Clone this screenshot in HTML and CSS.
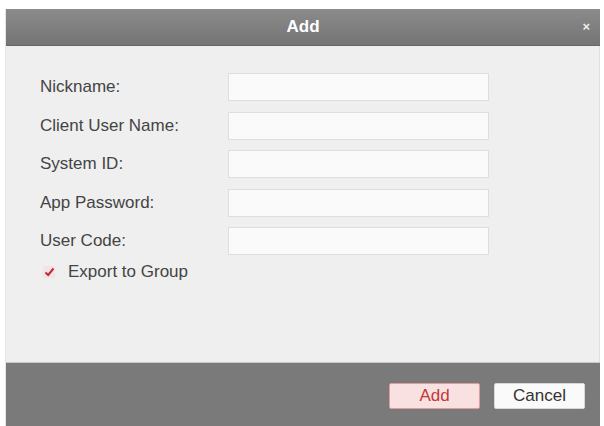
FILE: index.html
```html
<!DOCTYPE html>
<html lang="en">
<head>
    <meta charset="UTF-8">
    <meta name="viewport" content="width=device-width, initial-scale=1.0">
    <title>Add</title>
    <link rel="stylesheet" href="styles.css">
</head>
<body>
    <div class="dialog">
        <header class="dialog-header">
            <h1>Add</h1>
            <span class="close">&times;</span>
        </header>

        <main class="dialog-body">
            <form class="add-form">
                <div class="row">
                    <label for="nickname">Nickname:</label>
                    <input type="text" id="nickname">
                </div>
                <div class="row">
                    <label for="clientUser">Client User Name:</label>
                    <input type="text" id="clientUser">
                </div>
                <div class="row">
                    <label for="systemId">System ID:</label>
                    <input type="text" id="systemId">
                </div>
                <div class="row">
                    <label for="appPassword">App Password:</label>
                    <input type="password" id="appPassword">
                </div>
                <div class="row">
                    <label for="userCode">User Code:</label>
                    <input type="text" id="userCode">
                </div>
                <div class="check-row">
                    <span class="check">
                        <svg width="11" height="10" viewBox="0 0 11 10">
                            <path d="M1.5 5.5 L4.2 8 L9.5 1.5" fill="none" stroke="#c0293a" stroke-width="2"/>
                        </svg>
                    </span>
                    <span>Export to Group</span>
                </div>
            </form>
        </main>

        <footer class="dialog-footer">
            <button class="btn btn-add">Add</button>
            <button class="btn">Cancel</button>
        </footer>
    </div>
</body>
</html>
```

FILE: styles.css
```css
*{
    font-family: "Liberation Sans", Arial, sans-serif;
    box-sizing: border-box;
}

body{
    margin: 0;
    background-color: #fff;
    padding: 9px 4px 0 5px;
}

.dialog{
    height: 417px;
    display: flex;
    flex-direction: column;
    border-left: 1px solid #e4e4e4;
}

.dialog-header{
    position: relative;
    height: 37px;
    background: linear-gradient(#8b8b8b, #747474);
    color: white;
    display: flex;
    align-items: center;
    justify-content: center;
    border-bottom: 1px solid #666;
}

.dialog-header h1{
    margin: 0;
    font-size: 17px;
    font-weight: bold;
}

.close{
    position: absolute;
    right: 10px;
    top: 10px;
    font-size: 13px;
    font-weight: bold;
    color: #eee;
}

.dialog-body{
    flex: 1;
    background-color: #efefef;
    border-right: 1px solid #e0e0e0;
    padding: 27px 0 0 34px;
}

.add-form .row{
    display: flex;
    align-items: center;
    height: 28px;
    margin-bottom: 10.5px;
}

.add-form label{
    width: 188px;
    font-size: 17px;
    color: #444;
}

.add-form input{
    width: 261px;
    height: 28px;
    border: 1px solid #dedede;
    background-color: #fafafa;
    outline: none;
}

.check-row{
    display: flex;
    align-items: center;
    gap: 13px;
    padding-left: 3px;
    margin-top: -4px;
    font-size: 17px;
    color: #444;
}

.check{
    width: 12px;
    height: 12px;
    background-color: #f3e4e4;
    display: flex;
    align-items: center;
    justify-content: center;
}

.dialog-footer{
    height: 64px;
    background-color: #7a7a7a;
    border-top: 1px solid #c8c8c8;
    display: flex;
    justify-content: flex-end;
    align-items: flex-start;
    gap: 14px;
    padding: 20px 15px 0 0;
}

.btn{
    width: 91px;
    height: 26px;
    border: 1px solid #d8d8d8;
    border-radius: 2px;
    background-color: #fafafa;
    color: #333;
    font-size: 17px;
    cursor: pointer;
}

.btn-add{
    background-color: #f9e1e1;
    border-color: #e09b9b;
    color: #c0393a;
}
```
